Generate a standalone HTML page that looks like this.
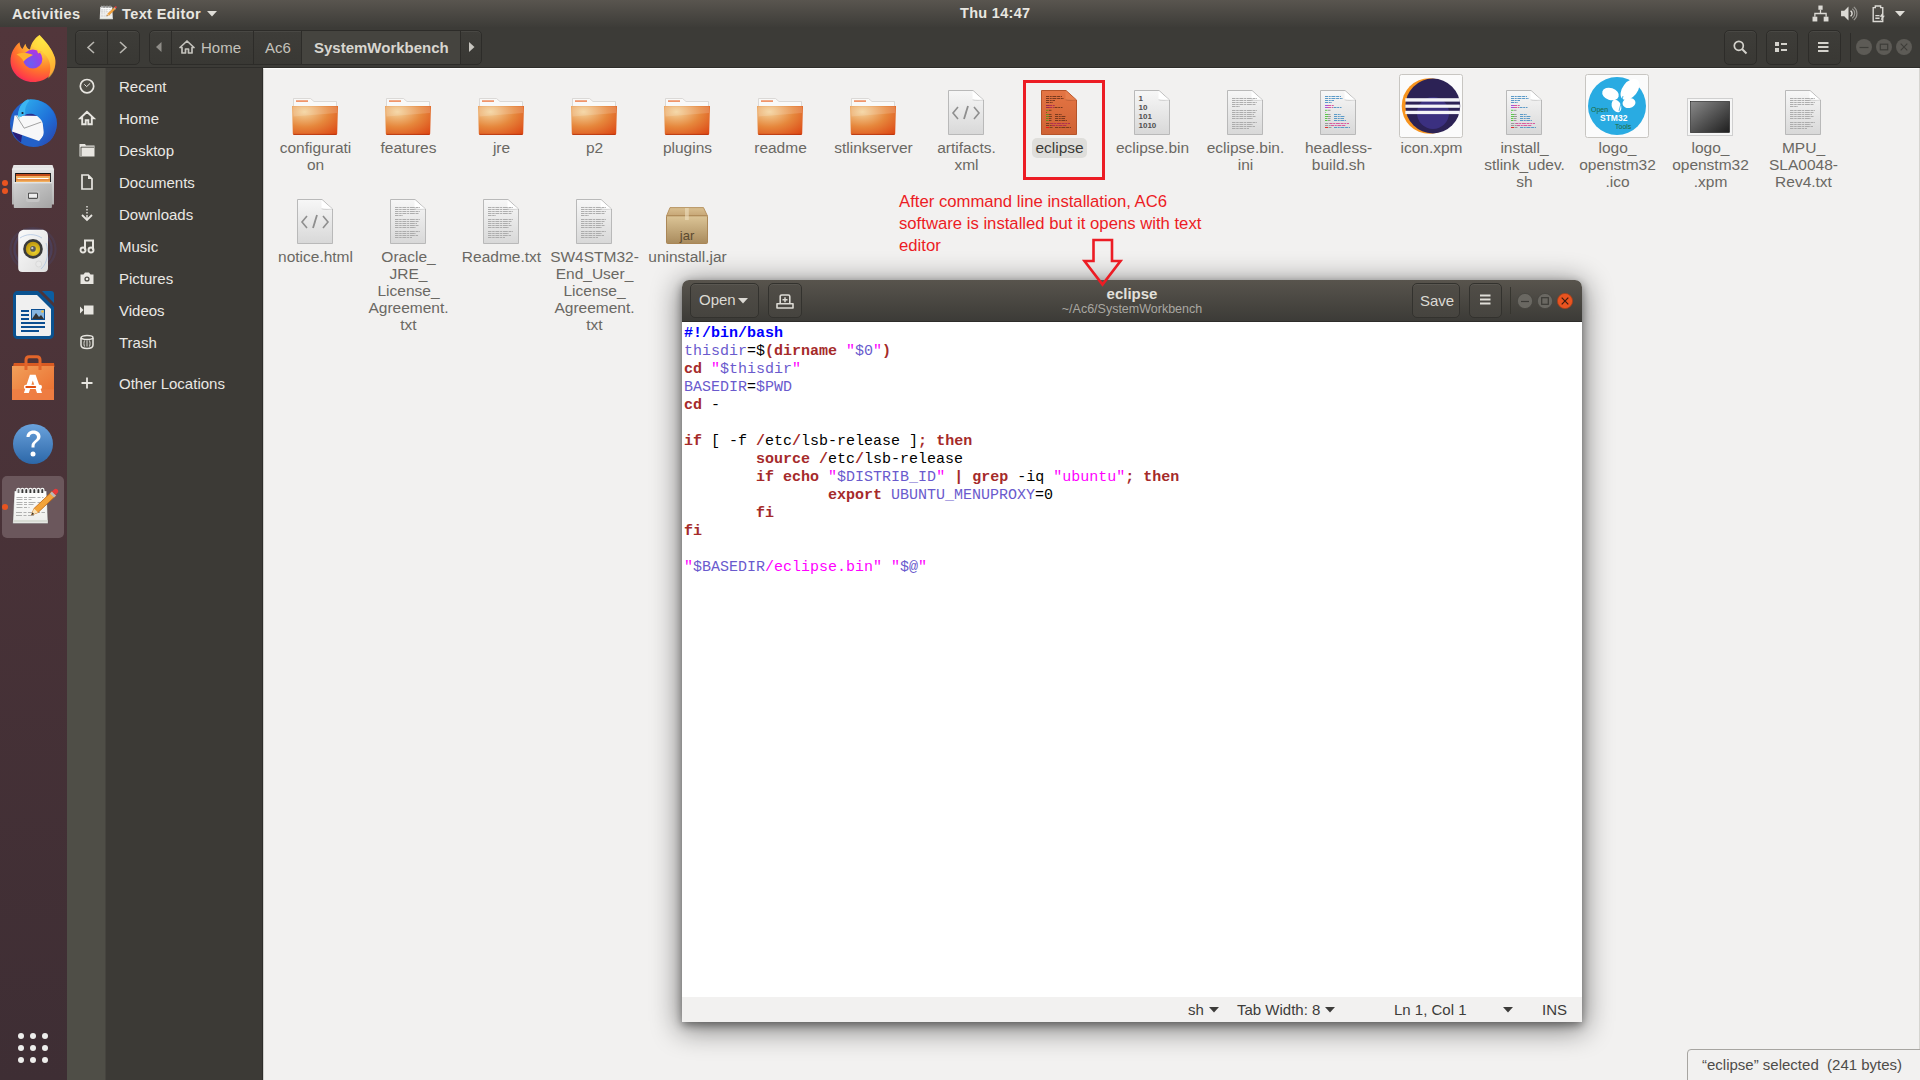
<!DOCTYPE html>
<html><head><meta charset="utf-8"><title>screen</title><style>
*{margin:0;padding:0;box-sizing:border-box}
html,body{width:1920px;height:1080px;overflow:hidden;background:#f2f1f0;font-family:"Liberation Sans",sans-serif;position:relative}
.a{position:absolute}
svg{position:absolute;overflow:visible}
#topbar{left:0;top:0;width:1920px;height:27px;background:linear-gradient(#59554f,#3d3c38)}
#hdr{left:67px;top:27px;width:1853px;height:41px;background:#3c3b37;border-bottom:1px solid #2e2d2a}
#dock{left:0;top:27px;width:67px;height:1053px;background:linear-gradient(#52363b,#3e2e34)}
#strip{left:67px;top:68px;width:38px;height:1012px;background:#4f4e47;border-right:1px solid #46443f;width:39px}
#side{left:106px;top:68px;width:157px;height:1012px;background:#3c3a36}
#content{left:263px;top:68px;width:1657px;height:1012px;background:#f2f1f0;border-left:1px solid #cfcecb;border-top:1px solid #fbfbfa}
#content:before{content:"";position:absolute;left:-2px;top:-1px;width:1px;height:1013px;background:#2e2d2a}
.tb{color:#e9e7e1;font-size:14.5px;font-weight:bold;top:6px;letter-spacing:0.4px;white-space:nowrap}
.si{color:#eae8e4;font-size:15px;left:119px;white-space:nowrap;line-height:17px}
.lbl{text-align:center;font-size:15.5px;line-height:17px;color:#6a6863;white-space:pre;width:110px}
.btn{border:1px solid #2d2c29;border-radius:5px;background:linear-gradient(#3e3d39,#393834);box-shadow:inset 0 1px rgba(255,255,255,0.06)}
#win{left:682px;top:280px;width:900px;height:742px;box-shadow:0 3px 8px rgba(0,0,0,0.4),0 5px 28px 3px rgba(0,0,0,0.48);border-radius:7px 7px 0 0;background:#fff}
#whdr{left:0;top:0;width:900px;height:42px;background:linear-gradient(#58544d,#3c3b37);border-radius:7px 7px 0 0;border-bottom:1px solid #2e2d2a}
#code{left:2px;top:45px;font-family:"Liberation Mono",monospace;font-size:15px;line-height:18px;white-space:pre;color:#000}
#code b{font-weight:bold;color:#a52a2a}
#code .c{color:#0000ff;font-weight:bold}
#code .s{color:#ff00ff}
#code .v{color:#6a5acd}
#status{left:0;top:717px;width:900px;height:25px;background:#f2f1f0}
.st{color:#3d3c3a;font-size:15px;top:4px;white-space:nowrap}
.ann{color:#ec1c24;font-size:16.7px;line-height:22px;white-space:pre}
</style></head><body>
<div id="topbar" class="a"></div>
<div id="hdr" class="a"></div>
<div id="dock" class="a"></div>
<div id="strip" class="a"></div>
<div id="side" class="a"></div>
<div id="content" class="a"></div>
<div class="a" style="left:1919px;top:68px;width:1px;height:1012px;background:#d6d5d1"></div>
<div class="a tb" style="left:12px">Activities</div>
<svg style="left:99px;top:4px" width="18" height="17" viewBox="6 4 48 45">
<defs><linearGradient id="np2" x1="0" y1="0" x2="0" y2="1"><stop offset="0" stop-color="#ffffff"/><stop offset="1" stop-color="#ececea"/></linearGradient></defs>
<path d="M9.5 12h32l1.5 32.5H7.8z" fill="url(#np2)" stroke="#3a3a3a" stroke-opacity="0.35" stroke-width="0.8"/>
<rect x="8.5" y="41" width="34" height="2.3" fill="#d8dcd4"/>
<path d="M11.9 14V11a1.6 1.6 0 0 1 3.2 0v3" stroke="#f4f4f4" stroke-width="1.4" fill="#707070"/><path d="M15.799999999999999 14V11a1.6 1.6 0 0 1 3.2 0v3" stroke="#f4f4f4" stroke-width="1.3" fill="#3a3a3a"/><path d="M19.7 14V11a1.6 1.6 0 0 1 3.2 0v3" stroke="#f4f4f4" stroke-width="1.3" fill="#3a3a3a"/><path d="M23.799999999999997 14V11a1.6 1.6 0 0 1 3.2 0v3" stroke="#f4f4f4" stroke-width="1.3" fill="#3a3a3a"/><path d="M27.7 14V11a1.6 1.6 0 0 1 3.2 0v3" stroke="#f4f4f4" stroke-width="1.3" fill="#3a3a3a"/><path d="M31.799999999999997 14V11a1.6 1.6 0 0 1 3.2 0v3" stroke="#f4f4f4" stroke-width="1.3" fill="#3a3a3a"/><path d="M35.699999999999996 14V11a1.6 1.6 0 0 1 3.2 0v3" stroke="#f4f4f4" stroke-width="1.3" fill="#3a3a3a"/>
<g stroke="#a8a8a8" stroke-width="0.9" stroke-dasharray="6 1.5 3 1.5 7 2 3 1.5">
<path d="M11.5 18.5h27M11.5 20.5h15M11.5 23.5h26M11.5 25.5h17M11.5 28.5h13M11 33.5h29M11 36.5h18"/></g>
<path d="M26.5 36L29 29.5 47 12.5 51 16.5 33 33.5z" fill="#f3a33a" stroke="#c06410" stroke-width="0.8"/>
<path d="M26.5 36L29 29.5 33 33.5z" fill="#fbe3b8"/><path d="M26.5 36l1-2.6 1.6 1.6z" fill="#1a1a1a"/>
<path d="M45 14.5l2-2 4 4-2 2z" fill="#b8b8b8"/>
<path d="M47 12.5l2-2c1-1 2.5-1 3.5 0s1 2.5 0 3.5l-2 2z" fill="#e83a3a"/>
</svg>
<div class="a tb" style="left:122px">Text Editor</div>
<svg style="left:207px;top:11px" width="10" height="6"><path d="M0 0h10L5 5.5z" fill="#e0ded8"/></svg>
<div class="a tb" style="left:960px;top:5px;letter-spacing:0.3px">Thu 14:47</div>
<svg style="left:1812px;top:5px" width="17" height="17" viewBox="0 0 16 16">
<rect x="6" y="0.5" width="4" height="4" fill="#dcdad5"/><rect x="0.5" y="11" width="4.5" height="4.5" fill="#dcdad5"/><rect x="11" y="11" width="4.5" height="4.5" fill="#dcdad5"/>
<path d="M8 4.5v3M2.7 11V8h10.6v3" stroke="#dcdad5" stroke-width="1.2" fill="none"/></svg>
<svg style="left:1840px;top:5px" width="17" height="17" viewBox="0 0 16 16">
<path d="M1 5.5h3l4-4v13l-4-4H1z" fill="#dcdad5"/>
<path d="M10 5.5a3 3 0 0 1 0 5M11.5 3.5a5.5 5.5 0 0 1 0 9M13 1.8a8 8 0 0 1 0 12.4" stroke="#9a9893" stroke-width="1.1" fill="none"/>
<path d="M10 5.5a3 3 0 0 1 0 5" stroke="#dcdad5" stroke-width="1.2" fill="none"/></svg>
<svg style="left:1870px;top:5px" width="17" height="17" viewBox="0 0 16 16">
<path d="M5 1h5v1.5h2v13H3V2.5h2z" fill="none" stroke="#dcdad5" stroke-width="1.3"/>
<path d="M5 10h4M5 12.5h4" stroke="#dcdad5" stroke-width="1.3"/>
<path d="M12 7l-3 4h2l-1 4 4-5h-2z" fill="#dcdad5"/></svg>
<svg style="left:1895px;top:11px" width="10" height="6"><path d="M0 0h10L5 5.5z" fill="#e0ded8"/></svg>
<div class="a btn" style="left:75px;top:30px;width:65px;height:35px"></div>
<div class="a" style="left:107px;top:31px;width:1px;height:33px;background:#2d2c29"></div>
<svg style="left:86px;top:41px" width="10" height="13"><path d="M8 1L2 6.5 8 12" stroke="#b8b6b0" stroke-width="1.6" fill="none"/></svg>
<svg style="left:118px;top:41px" width="10" height="13"><path d="M2 1l6 5.5L2 12" stroke="#b8b6b0" stroke-width="1.6" fill="none"/></svg>
<div class="a btn" style="left:149px;top:30px;width:333px;height:35px"></div>
<div class="a" style="left:302px;top:31px;width:158px;height:33px;background:#45443f"></div>
<div class="a" style="left:171px;top:31px;width:1px;height:33px;background:#2d2c29"></div>
<div class="a" style="left:253px;top:31px;width:1px;height:33px;background:#2d2c29"></div>
<div class="a" style="left:301px;top:31px;width:1px;height:33px;background:#2d2c29"></div>
<div class="a" style="left:460px;top:31px;width:1px;height:33px;background:#2d2c29"></div>
<svg style="left:156px;top:42px" width="6" height="10"><path d="M5.5 0v10L0 5z" fill="#8f8d88"/></svg>
<svg style="left:469px;top:42px" width="6" height="10"><path d="M0 0v10L5.5 5z" fill="#c8c6c0"/></svg>
<svg style="left:179px;top:40px" width="16" height="14" viewBox="0 0 16 14">
<path d="M8 1L1 7.5h2V13h3.5V9h3v4H13V7.5h2z" fill="none" stroke="#c4c2bc" stroke-width="1.7" stroke-linejoin="round"/></svg>
<div class="a" style="left:201px;top:39px;color:#c4c2bc;font-size:15px;white-space:nowrap">Home</div>
<div class="a" style="left:265px;top:39px;color:#c4c2bc;font-size:15px;white-space:nowrap">Ac6</div>
<div class="a" style="left:314px;top:39px;color:#d8d6d0;font-size:15px;font-weight:bold;white-space:nowrap">SystemWorkbench</div>
<div class="a btn" style="left:1724px;top:30px;width:33px;height:35px"></div>
<div class="a btn" style="left:1766px;top:30px;width:32px;height:35px"></div>
<div class="a btn" style="left:1808px;top:30px;width:33px;height:35px"></div>
<div class="a" style="left:1850px;top:33px;width:1px;height:29px;background:#2d2c29"></div>
<svg style="left:1733px;top:40px" width="15" height="15" viewBox="0 0 15 15">
<circle cx="5.8" cy="5.8" r="4.5" fill="none" stroke="#d4d2cc" stroke-width="1.7"/><path d="M9 9l4.5 4.5" stroke="#d4d2cc" stroke-width="1.9"/></svg>
<svg style="left:1775px;top:41px" width="14" height="12" viewBox="0 0 14 12">
<rect x="0" y="1" width="4" height="4" fill="#d4d2cc"/><rect x="0" y="7" width="4" height="4" fill="#d4d2cc"/>
<rect x="6" y="2" width="6" height="2" fill="#d4d2cc"/><rect x="6" y="8" width="6" height="2" fill="#d4d2cc"/></svg>
<svg style="left:1818px;top:41px" width="11" height="12" viewBox="0 0 11 12">
<rect x="0" y="1" width="10.5" height="2" fill="#d4d2cc"/><rect x="0" y="5" width="10.5" height="2" fill="#d4d2cc"/><rect x="0" y="9" width="10.5" height="2" fill="#d4d2cc"/></svg>
<svg style="left:1856px;top:39px" width="16" height="16" viewBox="-8 -8 16 16"><circle r="8" fill="#5d5b56"/><path d="M-4.5 0.5h9" stroke="#3e3d39" stroke-width="1.2"/></svg>
<svg style="left:1876px;top:39px" width="16" height="16" viewBox="-8 -8 16 16"><circle r="8" fill="#5d5b56"/><rect x="-3.7" y="-2.8" width="7.4" height="5.6" fill="none" stroke="#3e3d39" stroke-width="1.2"/></svg>
<svg style="left:1896px;top:39px" width="16" height="16" viewBox="-8 -8 16 16"><circle r="8" fill="#5d5b56"/><path d="M-3.3 -3.3l6.6 6.6M3.3 -3.3l-6.6 6.6" stroke="#3e3d39" stroke-width="1.1"/></svg>
<div class="a si" style="top:78px">Recent</div>
<div class="a si" style="top:110px">Home</div>
<div class="a si" style="top:142px">Desktop</div>
<div class="a si" style="top:174px">Documents</div>
<div class="a si" style="top:206px">Downloads</div>
<div class="a si" style="top:238px">Music</div>
<div class="a si" style="top:270px">Pictures</div>
<div class="a si" style="top:302px">Videos</div>
<div class="a si" style="top:334px">Trash</div>
<div class="a si" style="top:375px">Other Locations</div>
<svg style="left:79px;top:78px" width="16" height="16" viewBox="0 0 16 16"><circle cx="8" cy="8.2" r="6.7" fill="none" stroke="#e8e6e1" stroke-width="1.7"/><path d="M5.3 6.3L7.6 8.6l3.6-3.3" stroke="#e8e6e1" stroke-width="1" fill="none"/></svg>
<svg style="left:79px;top:110px" width="16" height="16" viewBox="0 0 16 16"><path d="M8 1.8L1.2 8.2h2V14.2h3.5v-4h2.6v4h3.5V8.2h2z" fill="none" stroke="#e8e6e1" stroke-width="1.9" stroke-linejoin="miter"/></svg>
<svg style="left:79px;top:142px" width="16" height="16" viewBox="0 0 16 16"><path d="M0.5 2h5.5l1 1.5h8.5V14.5H0.5z" fill="#e8e6e1"/><path d="M2 5.2h13" stroke="#4f4e48" stroke-width="0.9"/><path d="M2 5v9" stroke="#4f4e48" stroke-width="0.9"/></svg>
<svg style="left:79px;top:174px" width="16" height="16" viewBox="0 0 16 16"><path d="M3 1h6.2l3.8 3.8V15H3z" fill="none" stroke="#e8e6e1" stroke-width="1.7"/><path d="M9 1.2v3.8h4z" fill="#e8e6e1"/></svg>
<svg style="left:79px;top:206px" width="16" height="16" viewBox="0 0 16 16"><path d="M8 0v1.6M8 3v1.6M8 6v1.6M8 9v4" stroke="#e8e6e1" stroke-width="1.4"/><path d="M3 9l5 5 5-5" fill="none" stroke="#e8e6e1" stroke-width="1.8"/></svg>
<svg style="left:79px;top:238px" width="16" height="16" viewBox="0 0 16 16"><path d="M6 12V2.5h8V12" fill="none" stroke="#e8e6e1" stroke-width="2"/><circle cx="4" cy="12" r="2.5" fill="none" stroke="#e8e6e1" stroke-width="1.9"/><circle cx="12" cy="12" r="2.5" fill="none" stroke="#e8e6e1" stroke-width="1.9"/></svg>
<svg style="left:79px;top:270px" width="16" height="16" viewBox="0 0 16 16"><path d="M1.5 4.5h3l1.5-2h4l1.5 2h3v9.5h-13z" fill="#e8e6e1"/><circle cx="8" cy="9" r="2.6" fill="#4f4e48"/><circle cx="8" cy="9" r="1.3" fill="#e8e6e1"/></svg>
<svg style="left:79px;top:302px" width="16" height="16" viewBox="0 0 16 16"><rect x="5" y="3.5" width="9.5" height="9" fill="#e8e6e1"/><path d="M1 4.5l3.5 3.5L1 11.5z" fill="#e8e6e1"/></svg>
<svg style="left:79px;top:334px" width="16" height="16" viewBox="0 0 16 16"><ellipse cx="8" cy="3.5" rx="6" ry="2" fill="none" stroke="#e8e6e1" stroke-width="1.4"/><path d="M2 4v7c0 2.5 2.5 3.5 6 3.5s6-1 6-3.5V4" fill="none" stroke="#e8e6e1" stroke-width="1.5"/><path d="M5.5 6.5c-0.7 2-0.7 4 0 6M8 6.5v6M10.5 6.5c0.7 2 0.7 4 0 6" fill="none" stroke="#e8e6e1" stroke-width="0.9"/></svg>
<svg style="left:79px;top:375px" width="16" height="16" viewBox="0 0 16 16"><path d="M8 2.5v11M2.5 8h11" stroke="#e8e6e1" stroke-width="1.8"/></svg>
<div class="a" style="left:2px;top:476px;width:62px;height:62px;border-radius:5px;background:#6b575c"></div>
<div class="a" style="left:2px;top:180px;width:6px;height:6px;border-radius:3px;background:#e95420"></div>
<div class="a" style="left:2px;top:188px;width:6px;height:6px;border-radius:3px;background:#e95420"></div>
<div class="a" style="left:2px;top:504px;width:6px;height:6px;border-radius:3px;background:#e95420"></div>
<svg style="left:5px;top:30px" width="56" height="56" viewBox="0 0 56 56">
<defs>
<radialGradient id="ffb" cx="0.72" cy="0.1" r="1.05"><stop offset="0" stop-color="#fff44f"/><stop offset="0.3" stop-color="#ffc23a"/><stop offset="0.6" stop-color="#ff7a2a"/><stop offset="0.86" stop-color="#ff3c48"/><stop offset="1" stop-color="#e8147a"/></radialGradient>
<radialGradient id="ffg" cx="0.4" cy="0.75" r="0.8"><stop offset="0" stop-color="#6b5ef2"/><stop offset="0.55" stop-color="#8e45ea"/><stop offset="1" stop-color="#b734e2"/></radialGradient>
</defs>
<path d="M34.5 5C40 11 47 18 50 28C52.5 42 42 52 28 52C15 52 5.5 42 5.5 31C5.5 23 9 17 14.5 12.2C15 16 16 18 17.5 19C18.5 17 19.5 15 20.5 13.7C21 17 23 19 25 19.5C26 13 30 8 34.5 5z" fill="url(#ffb)"/>
<path d="M34.5 5C40 11 47 18 50 28C51.5 36 49 44 43 48.5C47 40 46 30 39 23.5C34 19 29 18 27 15.5C29 10 32 7 34.5 5z" fill="#ffdc3c" opacity="0.55"/>
<circle cx="27.8" cy="29" r="9.6" fill="url(#ffg)"/>
<path d="M11.5 24.5C16 22.5 22 22.5 28 25C25 26.5 21.5 28 18.5 31.5C17.5 28.5 14.5 26 11.5 24.5z" fill="#ffb22e"/>
<path d="M32 21.5c2-0.8 4-0.5 5.5 0.5c-1.5 0.3-3 0.5-4 1.5z" fill="#ffc03a"/>
</svg>
<svg style="left:5px;top:95px" width="56" height="56" viewBox="0 0 56 56">
<defs><linearGradient id="tbw" x1="0" y1="0" x2="1" y2="1"><stop offset="0" stop-color="#2fb4f0"/><stop offset="0.6" stop-color="#1f6fd8"/><stop offset="1" stop-color="#2b3fa8"/></linearGradient></defs>
<circle cx="28.5" cy="28.5" r="23.5" fill="#2361c9"/>
<path d="M20 20C25 17 33 17 38 21L37 30L20 28z" fill="#2a2f8c"/>
<path d="M7.3 36.3L17 40L16 47.5C12 45 9 41 7.3 36.3z" fill="#2a1f78"/>
<path d="M9.5 20.5L37 21L39 40L34 46L7 36.5z" fill="#f7f7f8"/>
<path d="M11.4 20.8L19.2 33.2L36.3 27" stroke="#8c8c8c" stroke-width="0.8" fill="none"/>
<path d="M13 22C13 13 18 5.5 25 4.2C36 4 46 10 49.5 20C53 29 51 40 45 46C40 50 34 52 29 51.5C36 47 40 40 39 32C38 26 34 21 28 19C24 18 19 19 15.5 22z" fill="url(#tbw)"/>
<path d="M13 23C12.5 15 16 7 23 4.3L24.5 5.5C20.5 10 19.5 15 20.5 19.5C18 20.5 15.5 21.8 13 23z" fill="#3cb6f2"/>
<circle cx="17.5" cy="18" r="1.1" fill="#1a1a2a"/>
<path d="M12 22.5l3.5-1.5-1 3.5z" fill="#a8e0e8"/>
</svg>
<svg style="left:5px;top:160px" width="56" height="56" viewBox="0 0 56 56">
<defs><linearGradient id="fl1" x1="0" y1="0" x2="0" y2="1"><stop offset="0" stop-color="#e8e8e8"/><stop offset="1" stop-color="#b0b0b0"/></linearGradient>
<linearGradient id="fl2" x1="0" y1="0" x2="1" y2="1"><stop offset="0" stop-color="#d2d2d2"/><stop offset="1" stop-color="#a4a4a4"/></linearGradient></defs>
<path d="M8.5 4.9h39l1.5 4.5V44.6H7V9.4z" fill="url(#fl1)"/>
<rect x="7" y="8.5" width="42" height="1" fill="#ffffff" opacity="0.5"/>
<rect x="10.1" y="13" width="35.8" height="9" fill="#151515"/>
<rect x="11" y="14" width="34" height="8" fill="#c04a18"/>
<rect x="11" y="16" width="34" height="6" fill="#f2b060"/>
<rect x="12.5" y="18" width="31" height="1.1" fill="#ffffff"/>
<rect x="11" y="19.5" width="34" height="0.8" fill="#d26020"/>
<rect x="8.8" y="22.3" width="38.1" height="25.7" rx="0.8" fill="url(#fl2)"/>
<rect x="8.8" y="22.3" width="38.1" height="1" fill="#eeeeee"/>
<rect x="21" y="31.1" width="13.7" height="10.9" rx="2" fill="#c4c4c4"/>
<rect x="23" y="32.8" width="9.8" height="6" rx="1" fill="#303030"/>
<rect x="23.8" y="33.6" width="8.2" height="4.2" fill="#eeeeee"/>
</svg>
<svg style="left:5px;top:223px" width="56" height="56" viewBox="0 0 56 56">
<defs><linearGradient id="rb1" x1="0" y1="0" x2="1" y2="1"><stop offset="0" stop-color="#fafafa"/><stop offset="1" stop-color="#dedede"/></linearGradient>
<radialGradient id="rb2" cx="0.6" cy="0.65" r="0.6"><stop offset="0" stop-color="#f0d830"/><stop offset="1" stop-color="#c09a10"/></radialGradient></defs>
<ellipse cx="28" cy="26" rx="18.5" ry="19" stroke="#4a5088" stroke-width="2.4" fill="none" opacity="0.4"/><ellipse cx="28" cy="26" rx="22.5" ry="21" stroke="#4a5088" stroke-width="2.2" fill="none" opacity="0.22"/>
<path d="M13.2 13c0-4 2.5-6.3 6.5-6.3h17c4 0 6.3 2.3 6.3 6.3v32c0 2.5-1.5 4-4 4H17.2c-2.5 0-4-1.5-4-4z" fill="url(#rb1)"/>
<path d="M15 15c6-4 14-5 22 0M41 20c3 8 2 20-5 26" stroke="#a8c0e0" stroke-width="0.9" fill="none" opacity="0.8"/>
<circle cx="28" cy="25.9" r="9.8" fill="#3a3a3a"/>
<circle cx="28" cy="25.9" r="7.2" fill="url(#rb2)"/>
<circle cx="28" cy="25.9" r="2.8" fill="#5a5a5a"/><circle cx="27.3" cy="25.2" r="1.1" fill="#cfcfcf"/>
<circle cx="33.7" cy="41" r="3" fill="#e8e8e8" stroke="#d0d0d0" stroke-width="0.6"/>
</svg>
<svg style="left:13px;top:291px" width="41" height="48" viewBox="0 0 41 48">
<path d="M0 5c0-3 2-5 5-5h20l16 16v27c0 3-2 5-5 5H5c-3 0-5-2-5-5z" fill="#0a5290"/>
<path d="M3 4h21l14 14v25c0 1-1 2-2 2H4c-1 0-1-1-1-2z" fill="#f0f0f0"/>
<path d="M29 0h9c2 0 3 1 3 3v9z" fill="#0b5ea1"/>
<rect x="8" y="19" width="8" height="2" fill="#0b4e91"/><rect x="8" y="23" width="8" height="2" fill="#0b4e91"/><rect x="8" y="27" width="8" height="2" fill="#0b4e91"/>
<rect x="18" y="18" width="14" height="11" fill="#0b4e91"/><rect x="19" y="19" width="12" height="9" fill="#87b6e0"/>
<path d="M19 28l4-6 3 4 2-2 3 4z" fill="#333"/><circle cx="29.5" cy="20.5" r="1.3" fill="#f0c040"/>
<rect x="8" y="31" width="24" height="2" fill="#0b4e91"/><rect x="8" y="35" width="24" height="2" fill="#0b4e91"/><rect x="8" y="39" width="18" height="2" fill="#0b4e91"/>
</svg>
<svg style="left:5px;top:352px" width="56" height="56" viewBox="0 0 56 56">
<defs><linearGradient id="us1" x1="0" y1="0" x2="1" y2="1"><stop offset="0" stop-color="#f2a05a"/><stop offset="1" stop-color="#ea6a2c"/></linearGradient></defs>
<path d="M8.8 11h40.2l0.5 4H8z" fill="#d85a22"/>
<path d="M21 18V8c0-2 1-3.2 3-3.2h8c2 0 3 1.2 3 3.2v10" stroke="#e2652a" stroke-width="3" fill="none"/>
<rect x="7" y="14" width="42" height="34" fill="url(#us1)"/>
<rect x="7" y="37.3" width="42" height="10.7" fill="#ee7e44" opacity="0.85"/>
<path d="M21 18v-4M35 18v-4" stroke="#e2652a" stroke-width="3"/>
<path d="M18.9 41L24.9 22.8h5.7L37 41h-5L27.8 28.5 23.8 41z" fill="#ffffff"/>
<rect x="18.9" y="32.7" width="18.1" height="4.4" rx="2.2" fill="#ffffff"/>
<rect x="20.3" y="33.9" width="10.9" height="2" rx="1" fill="#e24f10"/>
</svg>
<svg style="left:13px;top:424px" width="40" height="40" viewBox="0 0 40 40">
<defs><linearGradient id="hp1" x1="0" y1="0" x2="0" y2="1"><stop offset="0" stop-color="#6aa2dc"/><stop offset="1" stop-color="#2c67a8"/></linearGradient></defs>
<circle cx="20" cy="20" r="20" fill="url(#hp1)"/>
<path d="M13.5 13c0-4 3-6.5 7-6.5s7 2.5 7 6c0 5-6 5-6 10v1h-3v-1.5c0-5 5.5-5.5 5.5-9 0-2-1.5-3.3-3.6-3.3-2.3 0-3.7 1.5-3.8 3.3z" fill="#fff"/>
<circle cx="20" cy="30" r="2.5" fill="#fff"/>
</svg>
<svg style="left:5px;top:479px" width="56" height="56" viewBox="0 0 56 56">
<defs><linearGradient id="np" x1="0" y1="0" x2="0" y2="1"><stop offset="0" stop-color="#ffffff"/><stop offset="1" stop-color="#ececea"/></linearGradient></defs>
<path d="M9.5 12h32l1.5 32.5H7.8z" fill="url(#np)" stroke="#3a3a3a" stroke-opacity="0.35" stroke-width="0.8"/>
<rect x="8.5" y="41" width="34" height="2.3" fill="#d8dcd4"/>
<path d="M11.9 14V11a1.6 1.6 0 0 1 3.2 0v3" stroke="#f4f4f4" stroke-width="1.4" fill="#707070"/><path d="M15.799999999999999 14V11a1.6 1.6 0 0 1 3.2 0v3" stroke="#f4f4f4" stroke-width="1.3" fill="#3a3a3a"/><path d="M19.7 14V11a1.6 1.6 0 0 1 3.2 0v3" stroke="#f4f4f4" stroke-width="1.3" fill="#3a3a3a"/><path d="M23.799999999999997 14V11a1.6 1.6 0 0 1 3.2 0v3" stroke="#f4f4f4" stroke-width="1.3" fill="#3a3a3a"/><path d="M27.7 14V11a1.6 1.6 0 0 1 3.2 0v3" stroke="#f4f4f4" stroke-width="1.3" fill="#3a3a3a"/><path d="M31.799999999999997 14V11a1.6 1.6 0 0 1 3.2 0v3" stroke="#f4f4f4" stroke-width="1.3" fill="#3a3a3a"/><path d="M35.699999999999996 14V11a1.6 1.6 0 0 1 3.2 0v3" stroke="#f4f4f4" stroke-width="1.3" fill="#3a3a3a"/>
<g stroke="#a8a8a8" stroke-width="0.9" stroke-dasharray="6 1.5 3 1.5 7 2 3 1.5">
<path d="M11.5 18.5h27M11.5 20.5h15M11.5 23.5h26M11.5 25.5h17M11.5 28.5h13M11 33.5h29M11 36.5h18"/></g>
<path d="M26.5 36L29 29.5 47 12.5 51 16.5 33 33.5z" fill="#f3a33a" stroke="#c06410" stroke-width="0.8"/>
<path d="M26.5 36L29 29.5 33 33.5z" fill="#fbe3b8"/><path d="M26.5 36l1-2.6 1.6 1.6z" fill="#1a1a1a"/>
<path d="M45 14.5l2-2 4 4-2 2z" fill="#b8b8b8"/>
<path d="M47 12.5l2-2c1-1 2.5-1 3.5 0s1 2.5 0 3.5l-2 2z" fill="#e83a3a"/>
</svg>
<div class="a" style="left:18px;top:1033px;width:6px;height:6px;border-radius:3px;background:#eeeeec"></div>
<div class="a" style="left:30px;top:1033px;width:6px;height:6px;border-radius:3px;background:#eeeeec"></div>
<div class="a" style="left:42px;top:1033px;width:6px;height:6px;border-radius:3px;background:#eeeeec"></div>
<div class="a" style="left:18px;top:1045px;width:6px;height:6px;border-radius:3px;background:#eeeeec"></div>
<div class="a" style="left:30px;top:1045px;width:6px;height:6px;border-radius:3px;background:#eeeeec"></div>
<div class="a" style="left:42px;top:1045px;width:6px;height:6px;border-radius:3px;background:#eeeeec"></div>
<div class="a" style="left:18px;top:1057px;width:6px;height:6px;border-radius:3px;background:#eeeeec"></div>
<div class="a" style="left:30px;top:1057px;width:6px;height:6px;border-radius:3px;background:#eeeeec"></div>
<div class="a" style="left:42px;top:1057px;width:6px;height:6px;border-radius:3px;background:#eeeeec"></div>
<svg style="left:0;top:0" width="1" height="1"><defs>
<radialGradient id="fold" cx="0.27" cy="0.2" r="1.05"><stop offset="0" stop-color="#f3d29a"/><stop offset="0.5" stop-color="#e6873c"/><stop offset="1" stop-color="#dc4412"/></radialGradient>
<linearGradient id="page" x1="0" y1="0" x2="0" y2="1"><stop offset="0" stop-color="#f7f7f7"/><stop offset="1" stop-color="#d8d8d8"/></linearGradient>
<linearGradient id="opage" x1="0" y1="0" x2="0" y2="1"><stop offset="0" stop-color="#e47544"/><stop offset="1" stop-color="#cf6234"/></linearGradient>
<linearGradient id="xpm" x1="0" y1="0" x2="1" y2="1"><stop offset="0" stop-color="#8a8a8a"/><stop offset="1" stop-color="#1e1e1e"/></linearGradient>
<linearGradient id="box" x1="0" y1="0" x2="0" y2="1"><stop offset="0" stop-color="#d9bb8a"/><stop offset="1" stop-color="#b8935e"/></linearGradient>
</defs></svg>
<svg style="left:292px;top:98px" width="46" height="38" viewBox="0 0 46 38">
<path d="M1.5 0.5h17l3.5 3h22.5v6h-43z" fill="#f9f9f8" stroke="#d4d2cf" stroke-width="0.8"/>
<rect x="4" y="2.3" width="12" height="1.6" fill="#ee8a5c"/>
<path d="M0 8h46l-0.8 27.5c0 0.8-0.7 1.5-1.5 1.5H2.3c-0.8 0-1.5-0.7-1.5-1.5z" fill="url(#fold)"/>
<path d="M1 8.6h44v6.5L1.5 18.5z" fill="#ffffff" opacity="0.16"/><path d="M1.5 36.4h43" stroke="#b0300e" stroke-width="1" opacity="0.75"/>
</svg>
<svg style="left:385px;top:98px" width="46" height="38" viewBox="0 0 46 38">
<path d="M1.5 0.5h17l3.5 3h22.5v6h-43z" fill="#f9f9f8" stroke="#d4d2cf" stroke-width="0.8"/>
<rect x="4" y="2.3" width="12" height="1.6" fill="#ee8a5c"/>
<path d="M0 8h46l-0.8 27.5c0 0.8-0.7 1.5-1.5 1.5H2.3c-0.8 0-1.5-0.7-1.5-1.5z" fill="url(#fold)"/>
<path d="M1 8.6h44v6.5L1.5 18.5z" fill="#ffffff" opacity="0.16"/><path d="M1.5 36.4h43" stroke="#b0300e" stroke-width="1" opacity="0.75"/>
</svg>
<svg style="left:478px;top:98px" width="46" height="38" viewBox="0 0 46 38">
<path d="M1.5 0.5h17l3.5 3h22.5v6h-43z" fill="#f9f9f8" stroke="#d4d2cf" stroke-width="0.8"/>
<rect x="4" y="2.3" width="12" height="1.6" fill="#ee8a5c"/>
<path d="M0 8h46l-0.8 27.5c0 0.8-0.7 1.5-1.5 1.5H2.3c-0.8 0-1.5-0.7-1.5-1.5z" fill="url(#fold)"/>
<path d="M1 8.6h44v6.5L1.5 18.5z" fill="#ffffff" opacity="0.16"/><path d="M1.5 36.4h43" stroke="#b0300e" stroke-width="1" opacity="0.75"/>
</svg>
<svg style="left:571px;top:98px" width="46" height="38" viewBox="0 0 46 38">
<path d="M1.5 0.5h17l3.5 3h22.5v6h-43z" fill="#f9f9f8" stroke="#d4d2cf" stroke-width="0.8"/>
<rect x="4" y="2.3" width="12" height="1.6" fill="#ee8a5c"/>
<path d="M0 8h46l-0.8 27.5c0 0.8-0.7 1.5-1.5 1.5H2.3c-0.8 0-1.5-0.7-1.5-1.5z" fill="url(#fold)"/>
<path d="M1 8.6h44v6.5L1.5 18.5z" fill="#ffffff" opacity="0.16"/><path d="M1.5 36.4h43" stroke="#b0300e" stroke-width="1" opacity="0.75"/>
</svg>
<svg style="left:664px;top:98px" width="46" height="38" viewBox="0 0 46 38">
<path d="M1.5 0.5h17l3.5 3h22.5v6h-43z" fill="#f9f9f8" stroke="#d4d2cf" stroke-width="0.8"/>
<rect x="4" y="2.3" width="12" height="1.6" fill="#ee8a5c"/>
<path d="M0 8h46l-0.8 27.5c0 0.8-0.7 1.5-1.5 1.5H2.3c-0.8 0-1.5-0.7-1.5-1.5z" fill="url(#fold)"/>
<path d="M1 8.6h44v6.5L1.5 18.5z" fill="#ffffff" opacity="0.16"/><path d="M1.5 36.4h43" stroke="#b0300e" stroke-width="1" opacity="0.75"/>
</svg>
<svg style="left:757px;top:98px" width="46" height="38" viewBox="0 0 46 38">
<path d="M1.5 0.5h17l3.5 3h22.5v6h-43z" fill="#f9f9f8" stroke="#d4d2cf" stroke-width="0.8"/>
<rect x="4" y="2.3" width="12" height="1.6" fill="#ee8a5c"/>
<path d="M0 8h46l-0.8 27.5c0 0.8-0.7 1.5-1.5 1.5H2.3c-0.8 0-1.5-0.7-1.5-1.5z" fill="url(#fold)"/>
<path d="M1 8.6h44v6.5L1.5 18.5z" fill="#ffffff" opacity="0.16"/><path d="M1.5 36.4h43" stroke="#b0300e" stroke-width="1" opacity="0.75"/>
</svg>
<svg style="left:850px;top:98px" width="46" height="38" viewBox="0 0 46 38">
<path d="M1.5 0.5h17l3.5 3h22.5v6h-43z" fill="#f9f9f8" stroke="#d4d2cf" stroke-width="0.8"/>
<rect x="4" y="2.3" width="12" height="1.6" fill="#ee8a5c"/>
<path d="M0 8h46l-0.8 27.5c0 0.8-0.7 1.5-1.5 1.5H2.3c-0.8 0-1.5-0.7-1.5-1.5z" fill="url(#fold)"/>
<path d="M1 8.6h44v6.5L1.5 18.5z" fill="#ffffff" opacity="0.16"/><path d="M1.5 36.4h43" stroke="#b0300e" stroke-width="1" opacity="0.75"/>
</svg>
<svg style="left:948px;top:90px" width="36" height="45" viewBox="0 0 36 45">
<path d="M0.5 0.5h24.5l10.5 9.5v34.5h-35z" fill="url(#page)" stroke="#b9b9b9" stroke-width="1"/>
<path d="M24.5 0.8v9.2h10.8z" fill="#ffffff" opacity="0.95"/><path d="M24.5 9.5q2 1.5 10.8 0.5" stroke="#000" stroke-opacity="0.12" stroke-width="1.2" fill="none"/><path d="M10 17l-5 6 5 6M26 17l5 6-5 6" stroke="#8e8e8e" stroke-width="1.6" fill="none"/><path d="M20 16l-4 13" stroke="#8e8e8e" stroke-width="1.8"/></svg>
<svg style="left:1041px;top:90px" width="36" height="45" viewBox="0 0 36 45">
<path d="M0.5 0.5h24.5l10.5 9.5v34.5h-35z" fill="url(#opage)" stroke="#b5542a" stroke-width="1"/>
<path d="M24.5 0.8v9.2h10.8z" fill="#e8804e" opacity="0.95"/><path d="M24.5 9.5q2 1.5 10.8 0.5" stroke="#000" stroke-opacity="0.12" stroke-width="1.2" fill="none"/><g stroke-width="1" stroke-dasharray="3 0.7 2 0.7 4 0.7"><path d="M5 6.5h16" stroke="#7a3a1e"/><path d="M5 8.5h18" stroke="#7a3a1e"/><path d="M5 10.5h9" stroke="#7a3a1e"/><path d="M5 12.5h7" stroke="#7a3a1e"/><path d="M5 15.5h3" stroke="#9a2a50"/><path d="M8 15.5h6" stroke="#b03050"/><path d="M5 17.5h3" stroke="#9a2a50"/><path d="M8 17.5h5" stroke="#b03050"/><path d="M13.5 17.5h8" stroke="#7a3a1e"/><path d="M5 20.3h2.5" stroke="#6a8a1a"/><path d="M8 20.3h2.5" stroke="#7a4020"/><path d="M5 22.5h0.8" stroke="#7a4020"/><path d="M5 24.5h3" stroke="#6a8a1a"/><path d="M8 24.5h2.5" stroke="#7a4020"/><path d="M14 24.5h7" stroke="#7a3a1e"/><path d="M5 26.5h3" stroke="#6a8a1a"/><path d="M8 26.5h3" stroke="#7a4020"/><path d="M14 26.5h11" stroke="#7a3a1e"/><path d="M5 28.5h2.5" stroke="#6a8a1a"/><path d="M8 28.5h2.5" stroke="#7a4020"/><path d="M14 28.5h10" stroke="#7a3a1e"/><path d="M5 30.5h2.5" stroke="#6a8a1a"/><path d="M8 30.5h2.5" stroke="#7a4020"/><path d="M14 30.5h12" stroke="#7a3a1e"/><path d="M5 33.5h4.5" stroke="#7a4020"/><path d="M9.5 33.5h19.5" stroke="#b03050"/><path d="M5 35.5h6" stroke="#7a4020"/><path d="M11 35.5h15" stroke="#b03050"/><path d="M5 37.5h3" stroke="#e81818"/><path d="M8.5 37.5h3.5" stroke="#7a4020"/><path d="M14 37.5h16" stroke="#7a3a1e"/></g></svg>
<svg style="left:1134px;top:90px" width="36" height="45" viewBox="0 0 36 45">
<path d="M0.5 0.5h24.5l10.5 9.5v34.5h-35z" fill="url(#page)" stroke="#b9b9b9" stroke-width="1"/>
<path d="M24.5 0.8v9.2h10.8z" fill="#ffffff" opacity="0.95"/><path d="M24.5 9.5q2 1.5 10.8 0.5" stroke="#000" stroke-opacity="0.12" stroke-width="1.2" fill="none"/><g font-family="Liberation Sans" font-size="8" font-weight="bold" fill="#505050"><text x="4.5" y="11">1</text><text x="4.5" y="20">10</text><text x="4.5" y="29">101</text><text x="4.5" y="38">1010</text></g></svg>
<svg style="left:1227px;top:90px" width="36" height="45" viewBox="0 0 36 45">
<path d="M0.5 0.5h24.5l10.5 9.5v34.5h-35z" fill="url(#page)" stroke="#b9b9b9" stroke-width="1"/>
<path d="M24.5 0.8v9.2h10.8z" fill="#ffffff" opacity="0.95"/><path d="M24.5 9.5q2 1.5 10.8 0.5" stroke="#000" stroke-opacity="0.12" stroke-width="1.2" fill="none"/><g stroke="#a6a6a6" stroke-width="0.9" stroke-dasharray="3.5 0.7 2.5 0.7 4 0.7 2 0.7 5 0.7 3 0.7"><path d="M5 8.5h25"/><path d="M5 10.5h21"/><path d="M5 12.5h25"/><path d="M5 14.5h24"/><path d="M5 16.5h8"/><path d="M5 20.5h25"/><path d="M5 22.5h24"/><path d="M5 24.5h22"/><path d="M5 26.5h24"/><path d="M5 28.5h21"/><path d="M5 32.5h25"/><path d="M5 34.5h21"/><path d="M5 36.5h23"/><path d="M5 38.5h17"/></g></svg>
<svg style="left:1320px;top:90px" width="36" height="45" viewBox="0 0 36 45">
<path d="M0.5 0.5h24.5l10.5 9.5v34.5h-35z" fill="url(#page)" stroke="#b9b9b9" stroke-width="1"/>
<path d="M24.5 0.8v9.2h10.8z" fill="#ffffff" opacity="0.95"/><path d="M24.5 9.5q2 1.5 10.8 0.5" stroke="#000" stroke-opacity="0.12" stroke-width="1.2" fill="none"/><g stroke-width="1" stroke-dasharray="3 0.7 2 0.7 4 0.7"><path d="M5 6.5h16" stroke="#5b9ac8"/><path d="M5 8.5h18" stroke="#5b9ac8"/><path d="M5 10.5h9" stroke="#5b9ac8"/><path d="M5 12.5h7" stroke="#5b9ac8"/><path d="M5 15.5h3" stroke="#a855d8"/><path d="M8 15.5h6" stroke="#d85aa0"/><path d="M5 17.5h3" stroke="#a855d8"/><path d="M8 17.5h5" stroke="#d85aa0"/><path d="M13.5 17.5h8" stroke="#5b9ac8"/><path d="M5 20.3h2.5" stroke="#5cc84a"/><path d="M8 20.3h2.5" stroke="#9a9a9a"/><path d="M5 22.5h0.8" stroke="#9a9a9a"/><path d="M5 24.5h3" stroke="#5cc84a"/><path d="M8 24.5h2.5" stroke="#9a9a9a"/><path d="M14 24.5h7" stroke="#5b9ac8"/><path d="M5 26.5h3" stroke="#5cc84a"/><path d="M8 26.5h3" stroke="#9a9a9a"/><path d="M14 26.5h11" stroke="#5b9ac8"/><path d="M5 28.5h2.5" stroke="#5cc84a"/><path d="M8 28.5h2.5" stroke="#9a9a9a"/><path d="M14 28.5h10" stroke="#5b9ac8"/><path d="M5 30.5h2.5" stroke="#5cc84a"/><path d="M8 30.5h2.5" stroke="#9a9a9a"/><path d="M14 30.5h12" stroke="#5b9ac8"/><path d="M5 33.5h4.5" stroke="#9a9a9a"/><path d="M9.5 33.5h19.5" stroke="#d85aa0"/><path d="M5 35.5h6" stroke="#9a9a9a"/><path d="M11 35.5h15" stroke="#d85aa0"/><path d="M5 37.5h3" stroke="#e03030"/><path d="M8.5 37.5h3.5" stroke="#9a9a9a"/><path d="M14 37.5h16" stroke="#5b9ac8"/></g></svg>
<svg style="left:1399px;top:74px" width="64" height="64" viewBox="0 0 64 64">
<rect x="0.5" y="0.5" width="63" height="63" rx="2" fill="#fbfbfb" stroke="#c8c6c2"/>
<circle cx="30.5" cy="32" r="27.8" fill="#f7941e"/>
<circle cx="33.8" cy="32" r="27.4" fill="#2c2255"/>
<circle cx="34" cy="39" r="16" fill="#3b3080"/>
<rect x="6.3" y="24.2" width="54.5" height="3.4" fill="#f4f4f8"/>
<rect x="6.3" y="30.6" width="54.5" height="3.2" fill="#f4f4f8"/>
<rect x="6.3" y="36.8" width="54.5" height="3.3" fill="#f4f4f8"/>
</svg>
<svg style="left:1506px;top:90px" width="36" height="45" viewBox="0 0 36 45">
<path d="M0.5 0.5h24.5l10.5 9.5v34.5h-35z" fill="url(#page)" stroke="#b9b9b9" stroke-width="1"/>
<path d="M24.5 0.8v9.2h10.8z" fill="#ffffff" opacity="0.95"/><path d="M24.5 9.5q2 1.5 10.8 0.5" stroke="#000" stroke-opacity="0.12" stroke-width="1.2" fill="none"/><g stroke-width="1" stroke-dasharray="3 0.7 2 0.7 4 0.7"><path d="M5 6.5h16" stroke="#5b9ac8"/><path d="M5 8.5h18" stroke="#5b9ac8"/><path d="M5 10.5h9" stroke="#5b9ac8"/><path d="M5 12.5h7" stroke="#5b9ac8"/><path d="M5 15.5h3" stroke="#a855d8"/><path d="M8 15.5h6" stroke="#d85aa0"/><path d="M5 17.5h3" stroke="#a855d8"/><path d="M8 17.5h5" stroke="#d85aa0"/><path d="M13.5 17.5h8" stroke="#5b9ac8"/><path d="M5 20.3h2.5" stroke="#5cc84a"/><path d="M8 20.3h2.5" stroke="#9a9a9a"/><path d="M5 22.5h0.8" stroke="#9a9a9a"/><path d="M5 24.5h3" stroke="#5cc84a"/><path d="M8 24.5h2.5" stroke="#9a9a9a"/><path d="M14 24.5h7" stroke="#5b9ac8"/><path d="M5 26.5h3" stroke="#5cc84a"/><path d="M8 26.5h3" stroke="#9a9a9a"/><path d="M14 26.5h11" stroke="#5b9ac8"/><path d="M5 28.5h2.5" stroke="#5cc84a"/><path d="M8 28.5h2.5" stroke="#9a9a9a"/><path d="M14 28.5h10" stroke="#5b9ac8"/><path d="M5 30.5h2.5" stroke="#5cc84a"/><path d="M8 30.5h2.5" stroke="#9a9a9a"/><path d="M14 30.5h12" stroke="#5b9ac8"/><path d="M5 33.5h4.5" stroke="#9a9a9a"/><path d="M9.5 33.5h19.5" stroke="#d85aa0"/><path d="M5 35.5h6" stroke="#9a9a9a"/><path d="M11 35.5h15" stroke="#d85aa0"/><path d="M5 37.5h3" stroke="#e03030"/><path d="M8.5 37.5h3.5" stroke="#9a9a9a"/><path d="M14 37.5h16" stroke="#5b9ac8"/></g></svg>
<svg style="left:1585px;top:74px" width="64" height="64" viewBox="0 0 64 64">
<rect x="0.5" y="0.5" width="63" height="63" rx="2" fill="#fbfbfb" stroke="#c8c6c2"/>
<circle cx="32" cy="32" r="29" fill="#29abe2"/>
<g fill="#fff"><ellipse cx="45" cy="15.5" rx="7.5" ry="12" transform="rotate(38 45 15.5)"/><ellipse cx="25.5" cy="20" rx="8.5" ry="6" transform="rotate(18 25.5 20)"/><ellipse cx="44" cy="29" rx="6.5" ry="5" transform="rotate(-8 44 29)"/><ellipse cx="31.5" cy="32" rx="4.5" ry="6.5" transform="rotate(-25 31.5 32)"/></g><path d="M34 37l4-15" stroke="#29abe2" stroke-width="0.8"/>
<text x="6" y="38" font-family="Liberation Sans" font-size="7" fill="#1e6a3a">Open</text>
<text x="15" y="47" font-family="Liberation Sans" font-size="8.5" font-weight="bold" fill="#ffffff">STM32</text>
<text x="30" y="55" font-family="Liberation Sans" font-size="7" fill="#1e6a3a">Tools</text>
</svg>
<svg style="left:1687px;top:98px" width="46" height="38" viewBox="0 0 46 38">
<rect x="0.5" y="0.5" width="45" height="37" fill="#f6f6f6" stroke="#cfcfcf"/>
<rect x="3.5" y="3.5" width="39" height="31" fill="url(#xpm)" stroke="#111" stroke-width="0.6"/>
</svg>
<svg style="left:1785px;top:90px" width="36" height="45" viewBox="0 0 36 45">
<path d="M0.5 0.5h24.5l10.5 9.5v34.5h-35z" fill="url(#page)" stroke="#b9b9b9" stroke-width="1"/>
<path d="M24.5 0.8v9.2h10.8z" fill="#ffffff" opacity="0.95"/><path d="M24.5 9.5q2 1.5 10.8 0.5" stroke="#000" stroke-opacity="0.12" stroke-width="1.2" fill="none"/><g stroke="#a6a6a6" stroke-width="0.9" stroke-dasharray="3.5 0.7 2.5 0.7 4 0.7 2 0.7 5 0.7 3 0.7"><path d="M5 8.5h25"/><path d="M5 10.5h21"/><path d="M5 12.5h25"/><path d="M5 14.5h24"/><path d="M5 16.5h8"/><path d="M5 20.5h25"/><path d="M5 22.5h24"/><path d="M5 24.5h22"/><path d="M5 26.5h24"/><path d="M5 28.5h21"/><path d="M5 32.5h25"/><path d="M5 34.5h21"/><path d="M5 36.5h23"/><path d="M5 38.5h17"/></g></svg>
<div class="a" style="left:1032px;top:138px;width:55px;height:20px;border-radius:5px;background:#dfdedb"></div>
<div class="a lbl" style="left:260.5px;top:139px;">configurati
on</div>
<div class="a lbl" style="left:353.5px;top:139px;">features</div>
<div class="a lbl" style="left:446.5px;top:139px;">jre</div>
<div class="a lbl" style="left:539.5px;top:139px;">p2</div>
<div class="a lbl" style="left:632.5px;top:139px;">plugins</div>
<div class="a lbl" style="left:725.5px;top:139px;">readme</div>
<div class="a lbl" style="left:818.5px;top:139px;">stlinkserver</div>
<div class="a lbl" style="left:911.5px;top:139px;">artifacts.
xml</div>
<div class="a lbl" style="left:1004.5px;top:139px;color:#3c3b38;">eclipse</div>
<div class="a lbl" style="left:1097.5px;top:139px;">eclipse.bin</div>
<div class="a lbl" style="left:1190.5px;top:139px;">eclipse.bin.
ini</div>
<div class="a lbl" style="left:1283.5px;top:139px;">headless-
build.sh</div>
<div class="a lbl" style="left:1376.5px;top:139px;">icon.xpm</div>
<div class="a lbl" style="left:1469.5px;top:139px;">install_
stlink_udev.
sh</div>
<div class="a lbl" style="left:1562.5px;top:139px;">logo_
openstm32
.ico</div>
<div class="a lbl" style="left:1655.5px;top:139px;">logo_
openstm32
.xpm</div>
<div class="a lbl" style="left:1748.5px;top:139px;">MPU_
SLA0048-
Rev4.txt</div>
<svg style="left:297px;top:199px" width="36" height="45" viewBox="0 0 36 45">
<path d="M0.5 0.5h24.5l10.5 9.5v34.5h-35z" fill="url(#page)" stroke="#b9b9b9" stroke-width="1"/>
<path d="M24.5 0.8v9.2h10.8z" fill="#ffffff" opacity="0.95"/><path d="M24.5 9.5q2 1.5 10.8 0.5" stroke="#000" stroke-opacity="0.12" stroke-width="1.2" fill="none"/><path d="M10 17l-5 6 5 6M26 17l5 6-5 6" stroke="#8e8e8e" stroke-width="1.6" fill="none"/><path d="M20 16l-4 13" stroke="#8e8e8e" stroke-width="1.8"/></svg>
<svg style="left:390px;top:199px" width="36" height="45" viewBox="0 0 36 45">
<path d="M0.5 0.5h24.5l10.5 9.5v34.5h-35z" fill="url(#page)" stroke="#b9b9b9" stroke-width="1"/>
<path d="M24.5 0.8v9.2h10.8z" fill="#ffffff" opacity="0.95"/><path d="M24.5 9.5q2 1.5 10.8 0.5" stroke="#000" stroke-opacity="0.12" stroke-width="1.2" fill="none"/><g stroke="#a6a6a6" stroke-width="0.9" stroke-dasharray="3.5 0.7 2.5 0.7 4 0.7 2 0.7 5 0.7 3 0.7"><path d="M5 8.5h25"/><path d="M5 10.5h21"/><path d="M5 12.5h25"/><path d="M5 14.5h24"/><path d="M5 16.5h8"/><path d="M5 20.5h25"/><path d="M5 22.5h24"/><path d="M5 24.5h22"/><path d="M5 26.5h24"/><path d="M5 28.5h21"/><path d="M5 32.5h25"/><path d="M5 34.5h21"/><path d="M5 36.5h23"/><path d="M5 38.5h17"/></g></svg>
<svg style="left:483px;top:199px" width="36" height="45" viewBox="0 0 36 45">
<path d="M0.5 0.5h24.5l10.5 9.5v34.5h-35z" fill="url(#page)" stroke="#b9b9b9" stroke-width="1"/>
<path d="M24.5 0.8v9.2h10.8z" fill="#ffffff" opacity="0.95"/><path d="M24.5 9.5q2 1.5 10.8 0.5" stroke="#000" stroke-opacity="0.12" stroke-width="1.2" fill="none"/><g stroke="#a6a6a6" stroke-width="0.9" stroke-dasharray="3.5 0.7 2.5 0.7 4 0.7 2 0.7 5 0.7 3 0.7"><path d="M5 8.5h25"/><path d="M5 10.5h21"/><path d="M5 12.5h25"/><path d="M5 14.5h24"/><path d="M5 16.5h8"/><path d="M5 20.5h25"/><path d="M5 22.5h24"/><path d="M5 24.5h22"/><path d="M5 26.5h24"/><path d="M5 28.5h21"/><path d="M5 32.5h25"/><path d="M5 34.5h21"/><path d="M5 36.5h23"/><path d="M5 38.5h17"/></g></svg>
<svg style="left:576px;top:199px" width="36" height="45" viewBox="0 0 36 45">
<path d="M0.5 0.5h24.5l10.5 9.5v34.5h-35z" fill="url(#page)" stroke="#b9b9b9" stroke-width="1"/>
<path d="M24.5 0.8v9.2h10.8z" fill="#ffffff" opacity="0.95"/><path d="M24.5 9.5q2 1.5 10.8 0.5" stroke="#000" stroke-opacity="0.12" stroke-width="1.2" fill="none"/><g stroke="#a6a6a6" stroke-width="0.9" stroke-dasharray="3.5 0.7 2.5 0.7 4 0.7 2 0.7 5 0.7 3 0.7"><path d="M5 8.5h25"/><path d="M5 10.5h21"/><path d="M5 12.5h25"/><path d="M5 14.5h24"/><path d="M5 16.5h8"/><path d="M5 20.5h25"/><path d="M5 22.5h24"/><path d="M5 24.5h22"/><path d="M5 26.5h24"/><path d="M5 28.5h21"/><path d="M5 32.5h25"/><path d="M5 34.5h21"/><path d="M5 36.5h23"/><path d="M5 38.5h17"/></g></svg>
<svg style="left:666px;top:207px" width="42" height="37" viewBox="0 0 42 37">
<defs><linearGradient id="box2" x1="0" y1="0" x2="0" y2="1"><stop offset="0" stop-color="#dcc597"/><stop offset="1" stop-color="#a98b5d"/></linearGradient>
<linearGradient id="lid" x1="0" y1="0" x2="0" y2="1"><stop offset="0" stop-color="#d9bf90"/><stop offset="1" stop-color="#c6a676"/></linearGradient></defs>
<path d="M4 0.6h33.5l4 8.4H0.5z" fill="url(#lid)" stroke="#b38d5a" stroke-width="0.9"/>
<rect x="0.5" y="8.8" width="41" height="27.7" rx="1" fill="url(#box2)" stroke="#a57f4d" stroke-width="0.9"/>
<rect x="19" y="1" width="3.8" height="12" fill="#eedfbf" opacity="0.6"/>
<text x="21" y="32.5" font-family="Liberation Sans" font-size="13" fill="#5a4a30" text-anchor="middle">jar</text>
</svg>
<div class="a lbl" style="left:260.5px;top:248px">notice.html</div>
<div class="a lbl" style="left:353.5px;top:248px">Oracle_
JRE_
License_
Agreement.
txt</div>
<div class="a lbl" style="left:446.5px;top:248px">Readme.txt</div>
<div class="a lbl" style="left:539.5px;top:248px">SW4STM32-
End_User_
License_
Agreement.
txt</div>
<div class="a lbl" style="left:632.5px;top:248px">uninstall.jar</div>
<div id="win" class="a">
<div id="whdr" class="a"></div>
<div class="a btn" style="left:8px;top:3px;width:69px;height:35px;border-color:#33322e;background:linear-gradient(#504d47,#46443f)"></div>
<div class="a" style="left:17px;top:11px;color:#dcdad4;font-size:15px;white-space:nowrap">Open</div>
<svg style="left:56px;top:18px" width="10" height="6"><path d="M0 0h10L5 5.5z" fill="#dcdad4"/></svg>
<div class="a btn" style="left:86px;top:3px;width:34px;height:35px;border-color:#33322e;background:linear-gradient(#504d47,#46443f)"></div>
<svg style="left:94px;top:14px" width="18" height="15" viewBox="0 0 18 15">
<path d="M4.2 9.5V2.6c0-1 0.6-1.6 1.6-1.6h6.4c1 0 1.6 0.6 1.6 1.6v6.9" fill="none" stroke="#dcdad4" stroke-width="1.6"/>
<path d="M1 9.8h16v4.2H1z" fill="none" stroke="#dcdad4" stroke-width="1.6" stroke-linejoin="round"/>
<path d="M9 3.2v5M6.5 5.7h5" stroke="#dcdad4" stroke-width="1.5"/></svg>
<div class="a" style="left:0;top:5px;width:900px;text-align:center;color:#e2e0da;font-size:15px;font-weight:bold;white-space:nowrap">eclipse</div>
<div class="a" style="left:0;top:22px;width:900px;text-align:center;color:#a9a7a1;font-size:12.5px;white-space:nowrap">~/Ac6/SystemWorkbench</div>
<div class="a btn" style="left:730px;top:3px;width:48px;height:35px;border-color:#33322e;background:linear-gradient(#504d47,#46443f)"></div>
<div class="a" style="left:738px;top:12px;color:#dcdad4;font-size:15px;white-space:nowrap">Save</div>
<div class="a btn" style="left:787px;top:3px;width:33px;height:35px;border-color:#33322e;background:linear-gradient(#504d47,#46443f)"></div>
<svg style="left:798px;top:14px" width="11" height="12" viewBox="0 0 11 12">
<rect x="0" y="0.5" width="10.5" height="2" fill="#e0ded8"/><rect x="0" y="4.5" width="10.5" height="2" fill="#e0ded8"/><rect x="0" y="8.5" width="10.5" height="2" fill="#e0ded8"/></svg>
<div class="a" style="left:828px;top:7px;width:1px;height:27px;background:#36352f"></div>
<svg style="left:835px;top:13px" width="16" height="16" viewBox="-8 -8 16 16"><circle r="7.6" fill="#6a6862" stroke="#45443f" stroke-width="0.8"/><path d="M-4 0.5h8" stroke="#3c3b37" stroke-width="1.2"/></svg>
<svg style="left:855px;top:13px" width="16" height="16" viewBox="-8 -8 16 16"><circle r="7.6" fill="#6a6862" stroke="#45443f" stroke-width="0.8"/><rect x="-3.3" y="-3.3" width="6.6" height="6.6" fill="none" stroke="#3c3b37" stroke-width="1.2"/></svg>
<svg style="left:875px;top:13px" width="16" height="16" viewBox="-8 -8 16 16"><circle r="7.6" fill="#e95420" stroke="#a8401a" stroke-width="0.8"/><path d="M-3.3 -3.3l6.6 6.6M3.3 -3.3l-6.6 6.6" stroke="#3a1a10" stroke-width="1.2"/></svg>
<div id="code" class="a"><span class="c">#!/bin/bash</span>
<span class="v">thisdir</span>=$<b>(dirname</b> <span class="s">"</span><span class="v">$0</span><span class="s">"</span><b>)</b>
<b>cd</b> <span class="s">"</span><span class="v">$thisdir</span><span class="s">"</span>
<span class="v">BASEDIR</span>=<span class="v">$PWD</span>
<b>cd</b> -

<b>if</b> [ -f <b>/</b>etc<b>/</b>lsb-release ]<b>;</b> <b>then</b>
        <b>source</b> <b>/</b>etc<b>/</b>lsb-release
        <b>if</b> <b>echo</b> <span class="s">"</span><span class="v">$DISTRIB_ID</span><span class="s">"</span> <b>|</b> <b>grep</b> -iq <span class="s">"ubuntu"</span><b>;</b> <b>then</b>
                <b>export</b> <span class="v">UBUNTU_MENUPROXY</span>=0
        <b>fi</b>
<b>fi</b>

<span class="s">"</span><span class="v">$BASEDIR</span><span class="s">/eclipse.bin"</span> <span class="s">"</span><span class="v">$@</span><span class="s">"</span></div>
<div id="status" class="a"></div>
<div class="a st" style="left:506px;top:721px">sh</div>
<svg style="left:527px;top:727px" width="10" height="6"><path d="M0 0h10L5 5.5z" fill="#3d3c3a"/></svg>
<div class="a st" style="left:555px;top:721px">Tab Width: 8</div>
<svg style="left:643px;top:727px" width="10" height="6"><path d="M0 0h10L5 5.5z" fill="#3d3c3a"/></svg>
<div class="a st" style="left:712px;top:721px">Ln 1, Col 1</div>
<svg style="left:821px;top:727px" width="10" height="6"><path d="M0 0h10L5 5.5z" fill="#3d3c3a"/></svg>
<div class="a st" style="left:860px;top:721px">INS</div>
</div>
<div class="a" style="left:1023px;top:80px;width:82px;height:100px;border:3px solid #ec1c24"></div>
<div class="a ann" style="left:899px;top:191px">After command line installation, AC6
software is installed but it opens with text
editor</div>
<svg style="left:1080px;top:236px" width="46" height="52" viewBox="0 0 46 52">
<path d="M13.5 4h18.5v21h8.5L22.5 48.5 4.5 25h9z" fill="none" stroke="#ec1c24" stroke-width="2.6" stroke-linejoin="miter"/></svg>
<div class="a" style="left:1687px;top:1049px;width:240px;height:40px;border:1px solid #a7a5a1;border-radius:4px 0 0 0;background:#f2f1f0"></div>
<div class="a" style="left:1702px;top:1056px;color:#4e4c49;font-size:15px;white-space:pre">“eclipse” selected  (241 bytes)</div>
</body></html>
